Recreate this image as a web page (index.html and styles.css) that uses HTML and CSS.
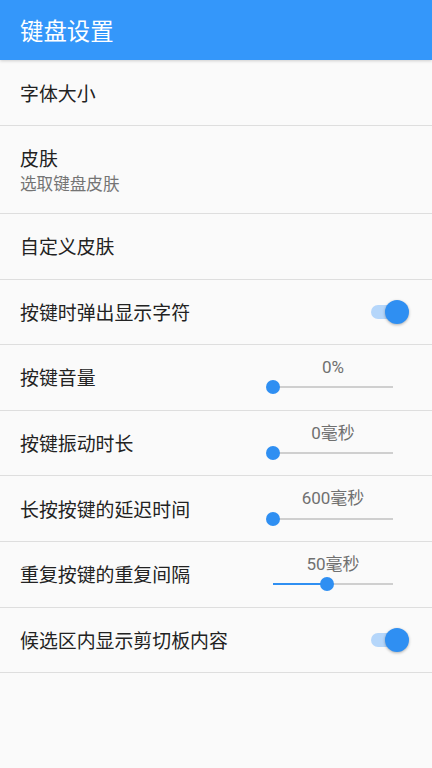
FILE: index.html
```html
<!DOCTYPE html>
<html lang="zh-CN">
<head>
<meta charset="utf-8">
<title>键盘设置</title>
<link rel="stylesheet" href="styles.css">
</head>
<body>
<header class="appbar">键盘设置</header>
<ul class="list">
  <li class="row row-first"><span class="label">字体大小</span></li>
  <li class="row row-two">
    <div class="texts">
      <span class="label">皮肤</span>
      <span class="sub">选取键盘皮肤</span>
    </div>
  </li>
  <li class="row"><span class="label">自定义皮肤</span></li>
  <li class="row">
    <span class="label">按键时弹出显示字符</span>
    <span class="switch on"><span class="track"></span><span class="thumb"></span></span>
  </li>
  <li class="row">
    <span class="label">按键音量</span>
    <div class="slider">
      <span class="value">0%</span>
      <div class="bar"><div class="rail"><div class="fill" style="width:0%"></div><div class="knob" style="left:0%"></div></div></div>
    </div>
  </li>
  <li class="row">
    <span class="label">按键振动时长</span>
    <div class="slider">
      <span class="value">0毫秒</span>
      <div class="bar"><div class="rail"><div class="fill" style="width:0%"></div><div class="knob" style="left:0%"></div></div></div>
    </div>
  </li>
  <li class="row">
    <span class="label">长按按键的延迟时间</span>
    <div class="slider">
      <span class="value">600毫秒</span>
      <div class="bar"><div class="rail"><div class="fill" style="width:0%"></div><div class="knob" style="left:0%"></div></div></div>
    </div>
  </li>
  <li class="row">
    <span class="label">重复按键的重复间隔</span>
    <div class="slider">
      <span class="value">50毫秒</span>
      <div class="bar"><div class="rail"><div class="fill" style="width:45%"></div><div class="knob" style="left:45%"></div></div></div>
    </div>
  </li>
  <li class="row">
    <span class="label">候选区内显示剪切板内容</span>
    <span class="switch on"><span class="track"></span><span class="thumb"></span></span>
  </li>
</ul>
</body>
</html>
```
FILE: styles.css
```css
* { box-sizing: border-box; }
html, body {
  margin: 0;
  padding: 0;
  height: 100%;
}
body {
  background: #fafafa;
  font-family: "Noto Sans CJK SC", "Noto Sans", sans-serif;
  color: #212121;
}
.appbar {
  height: 60px;
  background: #3497fa;
  color: #ffffff;
  font-size: 23.4px;
  display: flex;
  align-items: center;
  padding-left: 20px;
  box-shadow: 0 1px 3px rgba(0,0,0,0.18);
  position: relative;
  z-index: 1;
}
.list {
  list-style: none;
  margin: 0;
  padding: 0;
}
.row {
  height: 65.6px;
  border-bottom: 1px solid #dedede;
  display: flex;
  align-items: center;
  justify-content: space-between;
  padding: 0 24px 0 20px;
}
.row-first { height: 66px; }
.row-two { height: 88px; }
.label {
  font-size: 18.9px;
  line-height: 26px;
  color: #222222;
}
.texts {
  display: flex;
  flex-direction: column;
}
.sub {
  font-size: 16.6px;
  line-height: 24px;
  color: #747474;
}
.switch {
  position: relative;
  width: 40px;
  height: 24px;
  margin-right: -1px;
}
.switch .track {
  position: absolute;
  left: 2px;
  top: 5px;
  width: 34px;
  height: 14px;
  border-radius: 7px;
  background: #b5d6fa;
}
.switch .thumb {
  position: absolute;
  right: 0;
  top: 0;
  width: 24px;
  height: 24px;
  border-radius: 50%;
  background: #2f8ff2;
  box-shadow: 0 1px 3px rgba(0,0,0,0.3);
}
.slider {
  width: 134px;
  margin-right: 8px;
  display: flex;
  flex-direction: column;
  align-items: center;
}
.value {
  font-size: 17px;
  line-height: 20px;
  color: #707070;
  font-family: "Roboto", "Noto Sans CJK SC", sans-serif;
}
.bar {
  width: 100%;
  height: 21px;
  padding: 0 7px;
  display: flex;
  align-items: center;
}
.rail {
  position: relative;
  width: 100%;
  height: 2px;
  background: #cfcfcf;
}
.fill {
  position: absolute;
  left: 0;
  top: 0;
  height: 2px;
  background: #2f8ff2;
}
.knob {
  position: absolute;
  top: 1px;
  width: 14px;
  height: 14px;
  margin-left: -7px;
  margin-top: -7px;
  border-radius: 50%;
  background: #2f8ff2;
}
```
